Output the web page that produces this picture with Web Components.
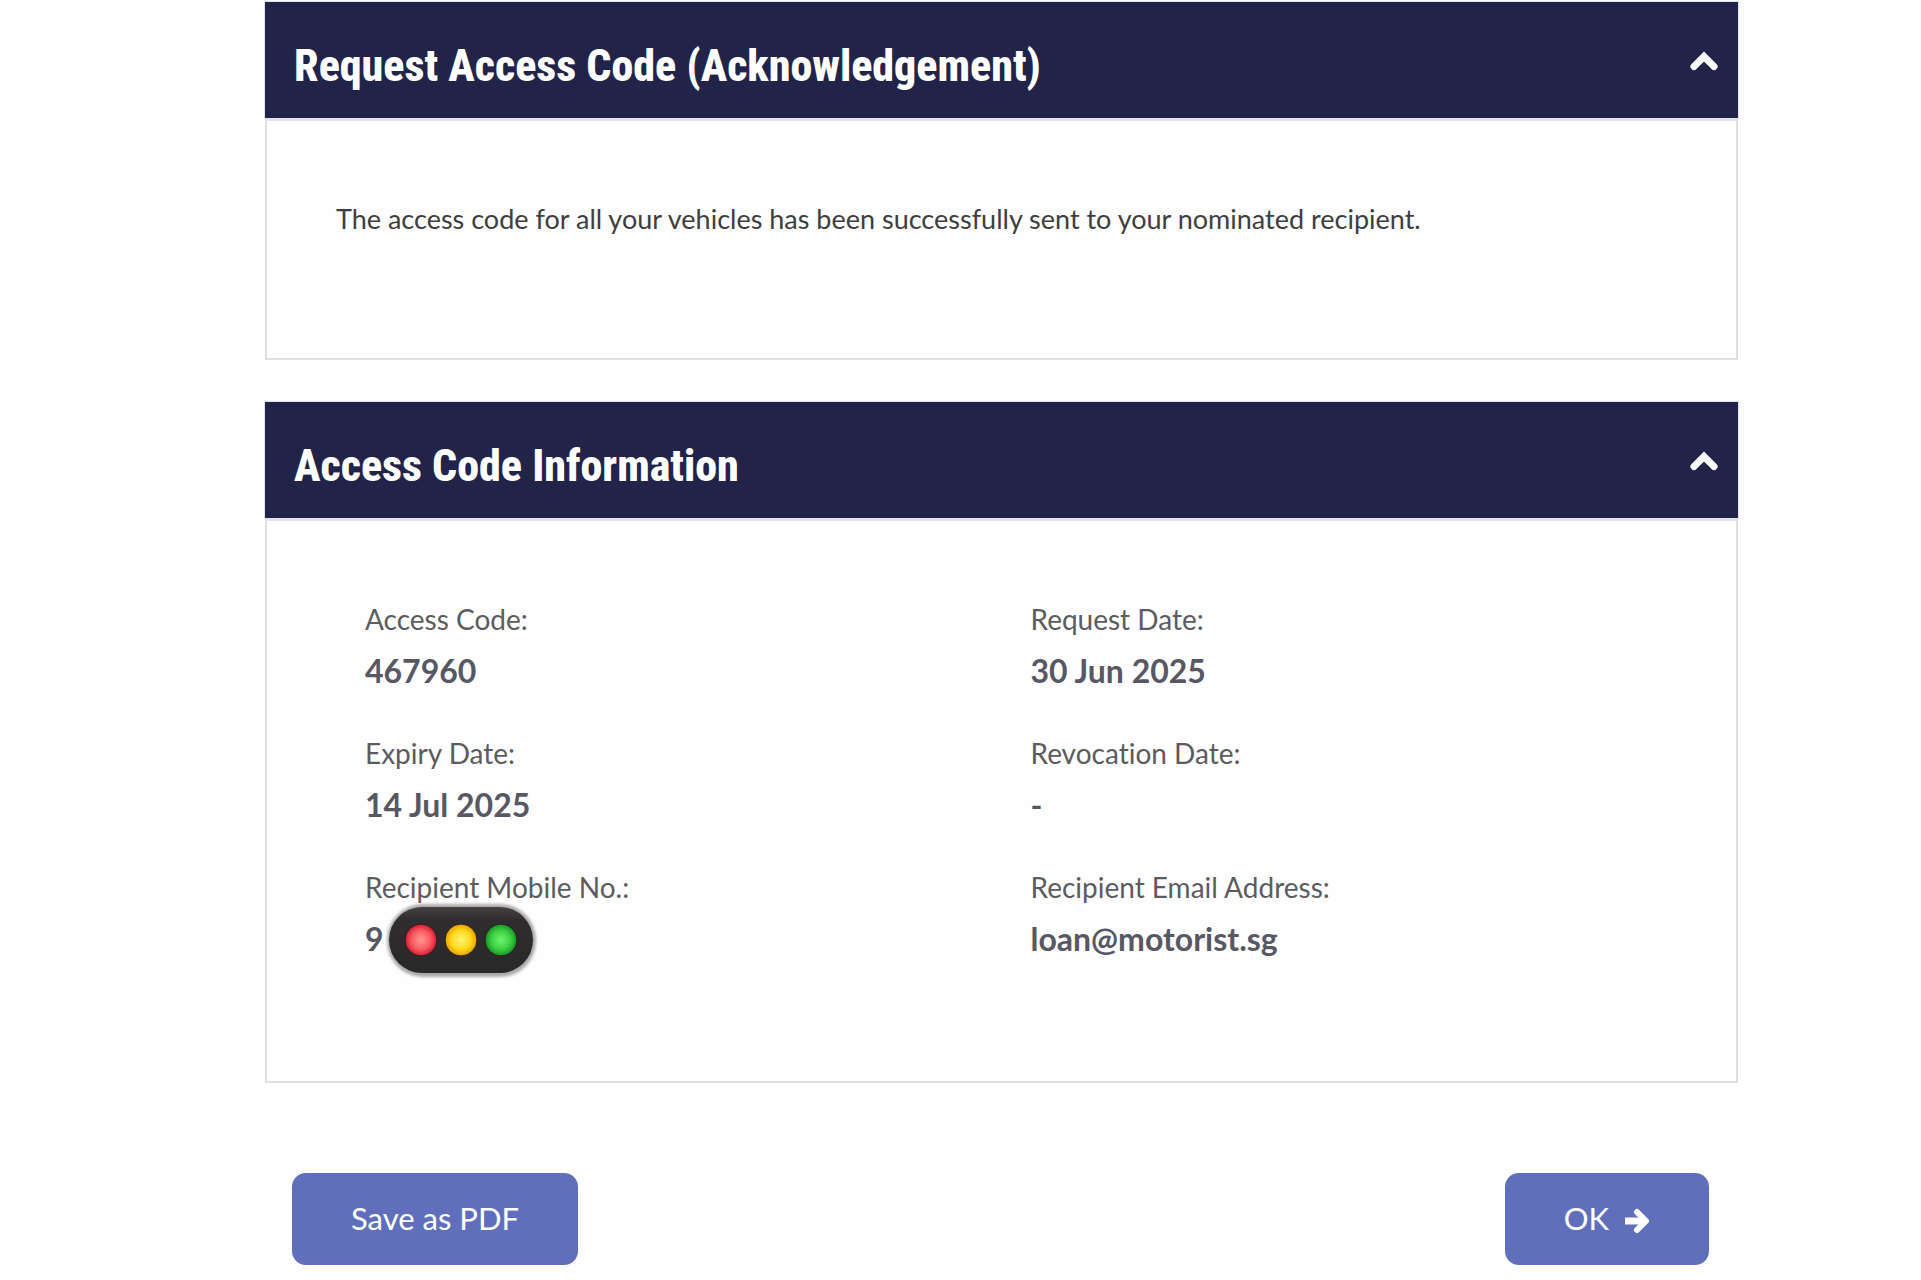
<!DOCTYPE html>
<html lang="en">
<head>
<meta charset="utf-8">
<meta name="viewport" content="width=device-width, initial-scale=1">
<title>Request Access Code</title>
<style>
body { margin: 0; background: #fefefe; font-family: Lato, "Open Sans", sans-serif; font-variant-ligatures: none; }
</style>
</head>
<body>
<access-page></access-page>
<script>
class PanelCard extends HTMLElement {
  constructor() {
    super();
    this.attachShadow({ mode: "open" }).innerHTML = `
      <style>
        :host { display: block; background: #fefefe; }
        header { display: flex; align-items: center; justify-content: space-between; height: 116px; box-sizing: border-box; padding: 12px 16px 0 29px; background: #212348; box-shadow: 0 3px 0 #e2e2f0, 0 0 0 1px #e2e2f0; color: #fff; }
        h2 { margin: 0; font: 800 44px/56px "Roboto Condensed", Roboto, "Liberation Sans", sans-serif; }
        button { display: flex; padding: 4px; margin: 0 0 10px; border: 0; background: none; color: inherit; cursor: pointer; }
        svg { display: block; width: 28px; height: 20px; }
        .body { padding: var(--panel-padding, 80px 71px); border: 2px solid #e0e0e3; border-top: 0; }
      </style>
      <header>
        <h2><slot name="title"></slot></h2>
        <button type="button" aria-label="Collapse section" aria-expanded="true">
          <svg viewBox="0 0 28 20" fill="none" stroke="currentColor" stroke-width="7" stroke-linecap="round"><path d="M4 15.500 14 5.500 24 15.500"/></svg>
        </button>
      </header>
      <div class="body"><slot></slot></div>`;
    const button = this.shadowRoot.querySelector("button");
    const body = this.shadowRoot.querySelector(".body");
    button.addEventListener("click", () => {
      body.hidden = !body.hidden;
      button.setAttribute("aria-expanded", String(!body.hidden));
    });
  }
}
customElements.define("panel-card", PanelCard);

class DetailItem extends HTMLElement {
  constructor() {
    super();
    this.attachShadow({ mode: "open" }).innerHTML = `
      <style>
        :host { display: block; }
        .label { font-size: 28px; line-height: 52px; color: #5c5c5e; }
        .value { display: flex; align-items: center; height: 52px; font-size: 32px; line-height: 52px; font-weight: 700; color: #575863; }
      </style>
      <div class="label"><slot name="label"></slot></div>
      <div class="value"><slot></slot></div>`;
  }
}
customElements.define("detail-item", DetailItem);

class SignalLights extends HTMLElement {
  constructor() {
    super();
    this.attachShadow({ mode: "open" }).innerHTML = `
      <style>
        :host { display: block; flex: none; }
        svg { display: block; width: 156px; height: 80px; }
      </style>
      <svg viewBox="0 0 156 80" role="img" aria-label="Hidden number">
        <defs>
          <linearGradient id="case" x1="0" y1="0" x2="0" y2="1"><stop offset="0" stop-color="#454142"/><stop offset=".2" stop-color="#302d2e"/><stop offset="1" stop-color="#292829"/></linearGradient>
          <radialGradient id="red"><stop offset="0" stop-color="#ff9b8e"/><stop offset=".6" stop-color="#fb5963"/><stop offset="1" stop-color="#cf1c32"/></radialGradient>
          <radialGradient id="yellow"><stop offset="0" stop-color="#fff477"/><stop offset=".6" stop-color="#ffd91c"/><stop offset="1" stop-color="#e89d00"/></radialGradient>
          <radialGradient id="green"><stop offset="0" stop-color="#70f36b"/><stop offset=".6" stop-color="#3bd143"/><stop offset="1" stop-color="#139323"/></radialGradient>
          <filter id="soft" x="-10%" y="-20%" width="120%" height="140%"><feGaussianBlur stdDeviation="1.500"/></filter>
        </defs>
        <rect x="3" y="5" width="149" height="73" rx="36" fill="#a9a9a9" filter="url(#soft)"/>
        <rect x="5" y="8" width="144" height="66" rx="33" fill="url(#case)"/>
        <g stroke="#2b1d1b" stroke-width="1">
          <circle cx="37" cy="41" r="16" fill="url(#red)"/>
          <circle cx="77" cy="41" r="16" fill="url(#yellow)"/>
          <circle cx="117" cy="41" r="16" fill="url(#green)"/>
        </g>
      </svg>`;
  }
}
customElements.define("signal-lights", SignalLights);

class ActionButton extends HTMLElement {
  constructor() {
    super();
    this.attachShadow({ mode: "open" }).innerHTML = `
      <style>
        :host { display: block; }
        button { display: flex; align-items: center; justify-content: center; gap: 15px; height: 92px; padding: 0 59px 2px; border: 0; border-radius: 14px; background: #606fbc; color: #fff; font: 400 31px/40px Lato, sans-serif; white-space: nowrap; cursor: pointer; }
      </style>
      <button type="button"><slot></slot></button>`;
  }
}
customElements.define("action-button", ActionButton);

class AccessPage extends HTMLElement {
  constructor() {
    super();
    this.attachShadow({ mode: "open" }).innerHTML = `
      <style>
        :host { display: block; padding: 2px 183px 15px 265px; }
        main { display: flex; flex-direction: column; gap: 42px; }
        .message { --panel-padding: 79px 69px 117px; }
        .details { --panel-padding: 75px 40px 116px 98px; }
        p { margin: 0; font-size: 27px; line-height: 44px; color: #3e3e40; }
        .grid { display: grid; grid-template-columns: 1fr 1fr; row-gap: 30px; }
        .actions { display: flex; justify-content: space-between; padding: 48px 29px 0 27px; }
        .arrow { display: block; width: 26px; height: 26px; padding-top: 5px; }
      </style>
      <main>
        <panel-card class="message">
          <span slot="title">Request Access Code (Acknowledgement)</span>
          <p>The access code for all your vehicles has been successfully sent to your nominated recipient.</p>
        </panel-card>
        <panel-card class="details">
          <span slot="title">Access Code Information</span>
          <div class="grid">
            <detail-item><span slot="label">Access Code:</span>467960</detail-item>
            <detail-item><span slot="label">Request Date:</span>30 Jun 2025</detail-item>
            <detail-item><span slot="label">Expiry Date:</span>14 Jul 2025</detail-item>
            <detail-item><span slot="label">Revocation Date:</span>-</detail-item>
            <detail-item><span slot="label">Recipient Mobile No.:</span>9<signal-lights></signal-lights></detail-item>
            <detail-item><span slot="label">Recipient Email Address:</span>loan@motorist.sg</detail-item>
          </div>
        </panel-card>
        <div class="actions">
          <action-button>Save as PDF</action-button>
          <action-button>OK<svg class="arrow" viewBox="0 0 26 26" fill="none" stroke="#fff" stroke-linecap="round" stroke-linejoin="round"><path stroke-width="7" stroke-linecap="butt" d="M1 13H20"/><path stroke-width="6" d="M13 4 22 13 13 22"/></svg></action-button>
        </div>
      </main>`;
  }
}
customElements.define("access-page", AccessPage);
</script>
</body>
</html>
